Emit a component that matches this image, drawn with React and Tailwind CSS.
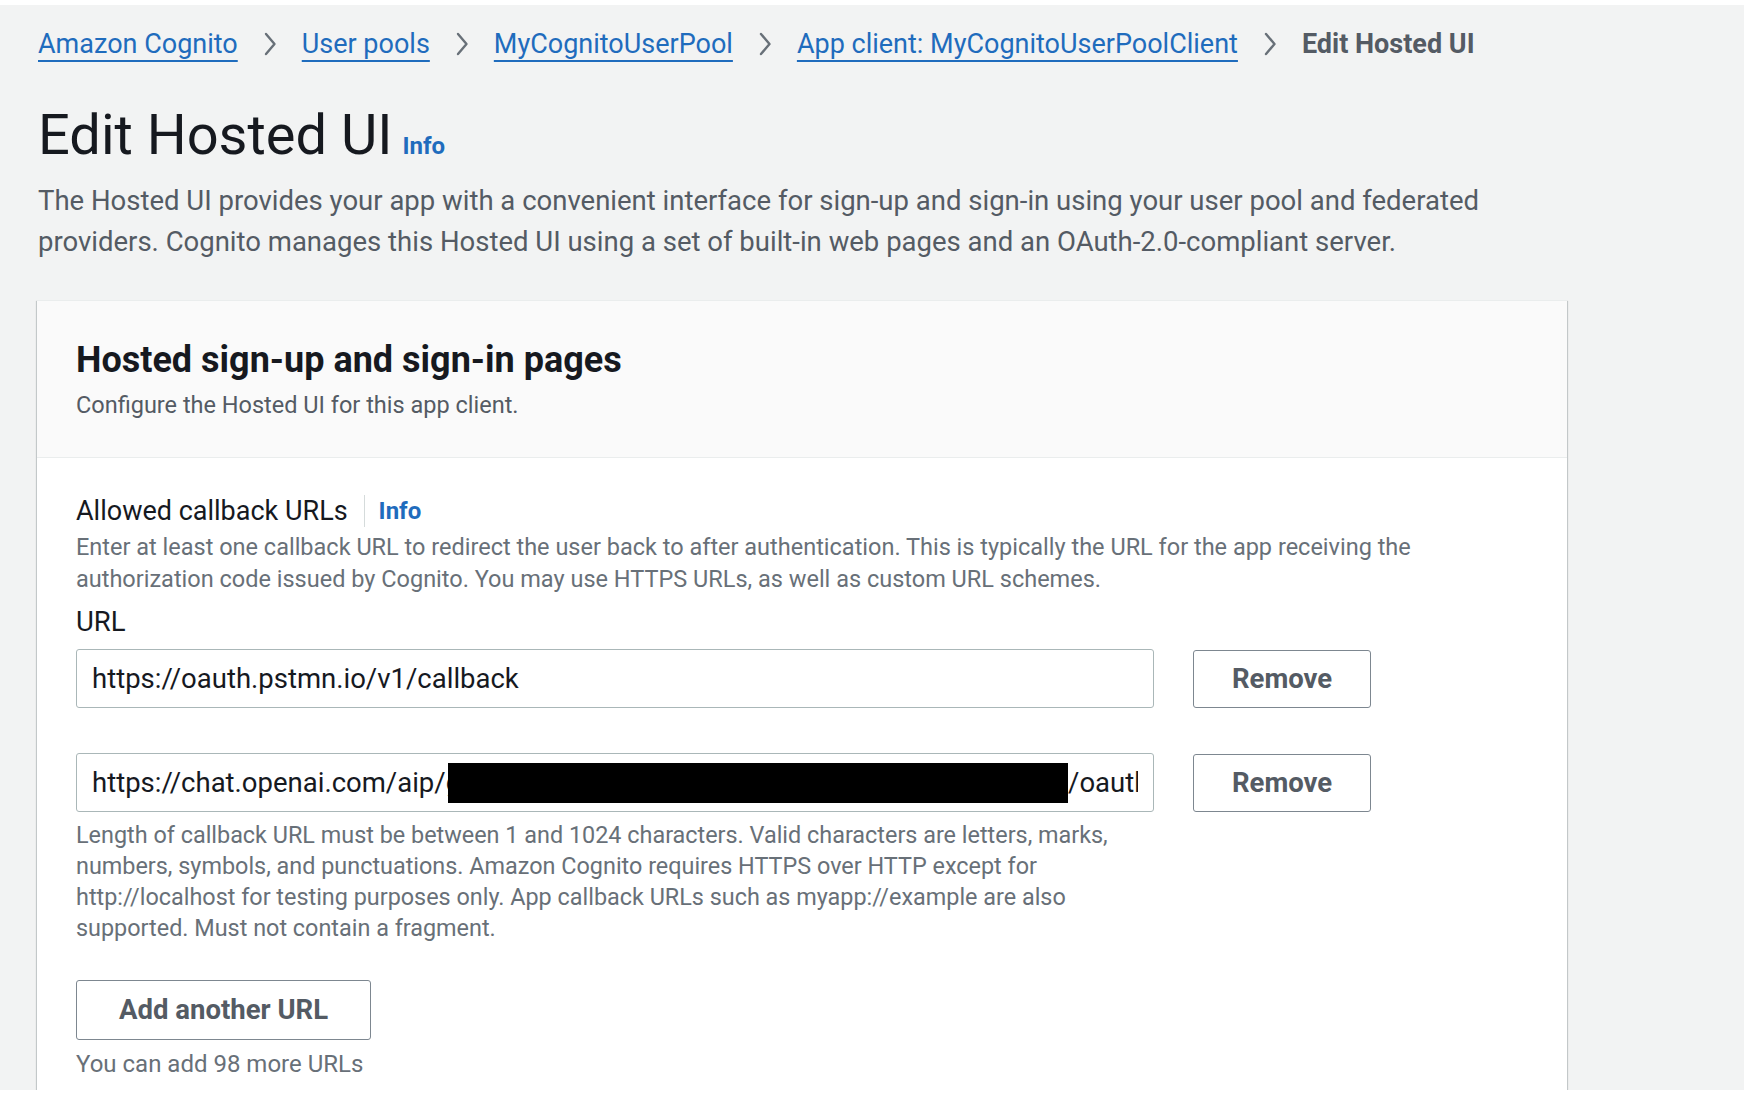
import React from 'react';

const Chevron = () => (
  <svg width="14" height="24" viewBox="0 0 14 24" fill="none" className="shrink-0">
    <path d="M3 2 L11.5 12 L3 22" stroke="#687078" strokeWidth="2.4" strokeLinecap="round" strokeLinejoin="round" />
  </svg>
);

const crumbs = ['Amazon Cognito', 'User pools', 'MyCognitoUserPool', 'App client: MyCognitoUserPoolClient'];

const RemoveButton = () => (
  <button className="h-[58px] px-[38px] border border-[#7d8790] rounded-[3px] bg-white text-[27.5px] font-bold text-[#545b64] shrink-0">
    Remove
  </button>
);

const App = () => {
  return (
    <div className="w-full h-[1096px] bg-white pt-[5px] pb-[6px] overflow-hidden" style={{ fontFamily: 'Roboto, "Noto Sans", sans-serif' }}>
      <div className="h-full bg-[#f2f3f3] overflow-hidden pl-[38px]">
        {/* Breadcrumbs */}
        <nav className="flex items-center gap-[25px] pt-[19px] text-[27px] leading-[40px]">
          {crumbs.map((c) => (
            <React.Fragment key={c}>
              <a className="text-[#1f6cbd] underline decoration-2 underline-offset-[7px] whitespace-nowrap">{c}</a>
              <Chevron />
            </React.Fragment>
          ))}
          <span className="text-[#545b64] font-bold whitespace-nowrap">Edit Hosted UI</span>
        </nav>

        {/* Title */}
        <div className="flex items-baseline mt-[39px]">
          <h1 className="text-[56px] leading-[64px] text-[#16191f] font-normal">Edit Hosted UI</h1>
          <span className="ml-[10px] text-[24px] font-bold text-[#1f6cbd]">Info</span>
        </div>
        <p className="mt-[13px] text-[27.5px] leading-[41px] text-[#545b64]">
          The Hosted UI provides your app with a convenient interface for sign-up and sign-in using your user pool and federated
          <br />
          providers. Cognito manages this Hosted UI using a set of built-in web pages and an OAuth-2.0-compliant server.
        </p>

        {/* Panel */}
        <div className="mt-[38px] -ml-px w-[1530px] bg-white shadow-[0_1px_1px_0_rgba(0,28,36,0.3),1px_1px_1px_0_rgba(0,28,36,0.15),-1px_1px_1px_0_rgba(0,28,36,0.15)] border-t border-[#eaeded]">
          <div className="bg-[#fafafa] border-b border-[#eaeded] px-[39px] pt-[37px] pb-[36px]">
            <h2 className="text-[36px] leading-[44px] font-bold text-[#16191f]">Hosted sign-up and sign-in pages</h2>
            <p className="mt-[7px] text-[23.5px] leading-[32px] text-[#545b64]">Configure the Hosted UI for this app client.</p>
          </div>

          <div className="px-[39px] pt-[33px] pb-[40px]">
            <div className="flex items-center text-[27px] leading-[40px]">
              <span className="text-[#16191f]">Allowed callback URLs</span>
              <span className="ml-[16px] mr-[14px] w-px h-[32px] bg-[#d5dbdb]" />
              <span className="text-[24px] font-bold text-[#1f6cbd]">Info</span>
            </div>
            <p className="text-[23.5px] leading-[32px] text-[#687078]">
              Enter at least one callback URL to redirect the user back to after authentication. This is typically the URL for the app receiving the
              <br />
              authorization code issued by Cognito. You may use HTTPS URLs, as well as custom URL schemes.
            </p>

            <div className="mt-[7px] text-[27.5px] leading-[40px] text-[#16191f]">URL</div>

            <div className="mt-[7px] flex items-center gap-[39px]">
              <div className="w-[1078px] h-[59px] border border-[#aab7b8] rounded-[3px] bg-white flex items-center pl-[15px] text-[27.5px] text-[#16191f] overflow-hidden whitespace-nowrap">
                https://oauth.pstmn.io/v1/callback
              </div>
              <RemoveButton />
            </div>

            <div className="mt-[45px] flex items-center gap-[39px]">
              <div className="w-[1078px] h-[59px] border border-[#aab7b8] rounded-[3px] bg-white flex items-center pl-[15px] pr-[15px] text-[27.5px] text-[#16191f]">
                <div className="flex-1 flex items-center overflow-hidden whitespace-nowrap">
                  <span className="shrink-0">https://chat.openai.com/aip/g</span>
                  <span className="shrink-0 -ml-[13px] w-[620px] h-[40px] bg-black" />
                  <span className="shrink-0">/oauth/callback</span>
                </div>
              </div>
              <RemoveButton />
            </div>

            <p className="mt-[8px] text-[23.4px] leading-[31px] text-[#687078]">
              Length of callback URL must be between 1 and 1024 characters. Valid characters are letters, marks,
              <br />
              numbers, symbols, and punctuations. Amazon Cognito requires HTTPS over HTTP except for
              <br />
              http://localhost for testing purposes only. App callback URLs such as myapp://example are also
              <br />
              supported. Must not contain a fragment.
            </p>

            <button className="mt-[36px] h-[60px] px-[42px] border border-[#7d8790] rounded-[3px] bg-white text-[27.5px] font-bold text-[#545b64]">
              Add another URL
            </button>
            <div className="mt-[8px] text-[24px] leading-[32px] text-[#687078]">You can add 98 more URLs</div>
          </div>
        </div>
      </div>
    </div>
  );
};

export default App;
